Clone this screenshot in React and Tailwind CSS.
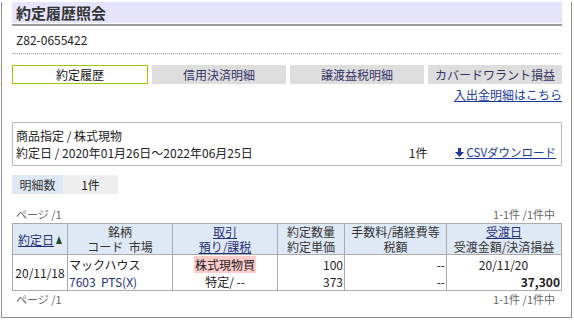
const tabs = ["約定履歴", "信用決済明細", "譲渡益税明細", "カバードワラント損益"];

const DownloadIcon = () => (
  <svg width="9" height="12" viewBox="0 0 9 12" className="mr-[3px]">
    <rect x="3" y="1" width="3" height="5" fill="#1f3a93" />
    <polygon points="0,5 9,5 4.5,10" fill="#1f3a93" />
    <rect x="0" y="11" width="9" height="1" fill="#1f3a93" />
  </svg>
);

const SortIcon = () => (
  <svg width="6" height="8" viewBox="0 0 6 8" className="inline-block ml-[2px] mb-[2px]">
    <polygon points="3,0 6,8 0,8" fill="#23492e" />
  </svg>
);

export default function App() {
  return (
    <div
      className="ml-px w-[571px] border-x border-b border-[#8c8c8c] pl-[10px] pr-[9px] pb-[11px] text-[12px] text-[#222]"
      style={{ fontFamily: '"Noto Sans CJK JP", "Noto Sans", sans-serif' }}
    >
      <div className="mt-[2px] h-[21px] bg-[#e4e4fc] pl-[4px] text-[15px] font-bold leading-[21px] text-[#333]">
        約定履歴照会
      </div>
      <div className="mt-[1px] h-[2px] bg-[#999]" />
      <div className="mt-[5px] pl-[4px] leading-[18px]">Z82-0655422</div>
      <div className="mt-[4px] border-t border-dotted border-[#aaa]" />

      <div className="mt-[11px] flex gap-[4px]">
        {tabs.map((t, i) => (
          <div
            key={t}
            className={
              i === 0
                ? "flex h-[19px] flex-1 items-center justify-center border border-[#99cc00] bg-white text-[#111]"
                : "flex h-[19px] flex-1 items-center justify-center bg-[#dddddd] text-[#333366]"
            }
          >
            {t}
          </div>
        ))}
      </div>
      <div className="mt-[3px] flex justify-end leading-[16px]">
        <span className="text-[#1a3aa0] underline">入出金明細はこちら</span>
      </div>

      <div className="mt-[19px] border border-[#bbb] px-[3px] py-[4px] leading-[17px]">
        <div>商品指定 / 株式現物</div>
        <div className="flex items-center">
          <span>約定日 / 2020年01月26日～2022年06月25日</span>
          <span className="ml-auto">1件</span>
          <span className="ml-[27px] mr-[2px] flex items-center text-[11.5px] text-[#1a3aa0]">
            <DownloadIcon />
            <span className="underline">CSVダウンロード</span>
          </span>
        </div>
      </div>

      <div className="mt-[9px] flex h-[19px] leading-[19px]">
        <div className="w-[51px] bg-[#dde8f4] text-center text-[#333]">明細数</div>
        <div className="w-[55px] bg-[#eeeeee] text-center">1件</div>
      </div>

      <div className="mt-[13px] flex justify-between px-[4px] text-[11px] leading-[14px] text-[#666]">
        <span>ページ /1</span>
        <span className="pr-[3px]">1-1件 /1件中</span>
      </div>

      <table className="mt-[2px] w-full table-fixed border-collapse">
        <colgroup>
          <col className="w-[55px]" />
          <col className="w-[105px]" />
          <col className="w-[105px]" />
          <col className="w-[67px]" />
          <col className="w-[102px]" />
          <col />
        </colgroup>
        <thead>
          <tr className="h-[31px] bg-[#dfe9f5] leading-[15px] text-[#333]">
            <th className="border border-[#aaa] font-normal">
              <span className="text-[#1f2f7a] underline">約定日</span>
              <SortIcon />
            </th>
            <th className="border border-[#aaa] font-normal">
              銘柄
              <br />
              コード&nbsp; 市場
            </th>
            <th className="border border-[#aaa] font-normal text-[#1f2f7a]">
              <span className="underline">取引</span>
              <br />
              <span className="underline">預り/課税</span>
            </th>
            <th className="border border-[#aaa] font-normal">
              約定数量
              <br />
              約定単価
            </th>
            <th className="border border-[#aaa] font-normal">
              手数料/諸経費等
              <br />
              税額
            </th>
            <th className="border border-[#aaa] font-normal">
              <span className="text-[#1f2f7a] underline">受渡日</span>
              <br />
              受渡金額/決済損益
            </th>
          </tr>
        </thead>
        <tbody>
          <tr className="h-[36px] leading-[17px]">
            <td className="border border-[#aaa] text-center">20/11/18</td>
            <td className="border border-[#aaa] pl-[1px]">
              マックハウス
              <br />
              <span className="text-[#1f2f7a]">7603&nbsp; PTS(X)</span>
            </td>
            <td className="border border-[#aaa] text-center">
              <span className="bg-[#ffcccc] px-[1px]">株式現物買</span>
              <br />
              特定/ --
            </td>
            <td className="border border-[#aaa] pr-[1px] text-right">
              100
              <br />
              373
            </td>
            <td className="border border-[#aaa] pr-[1px] text-right">
              --
              <br />
              --
            </td>
            <td className="border border-[#aaa] pr-[1px]">
              <div className="text-center">20/11/20</div>
              <div className="text-right font-bold">37,300</div>
            </td>
          </tr>
        </tbody>
      </table>

      <div className="mt-[1px] flex justify-between px-[4px] text-[11px] leading-[14px] text-[#666]">
        <span>ページ /1</span>
        <span className="pr-[3px]">1-1件 /1件中</span>
      </div>
    </div>
  );
}
